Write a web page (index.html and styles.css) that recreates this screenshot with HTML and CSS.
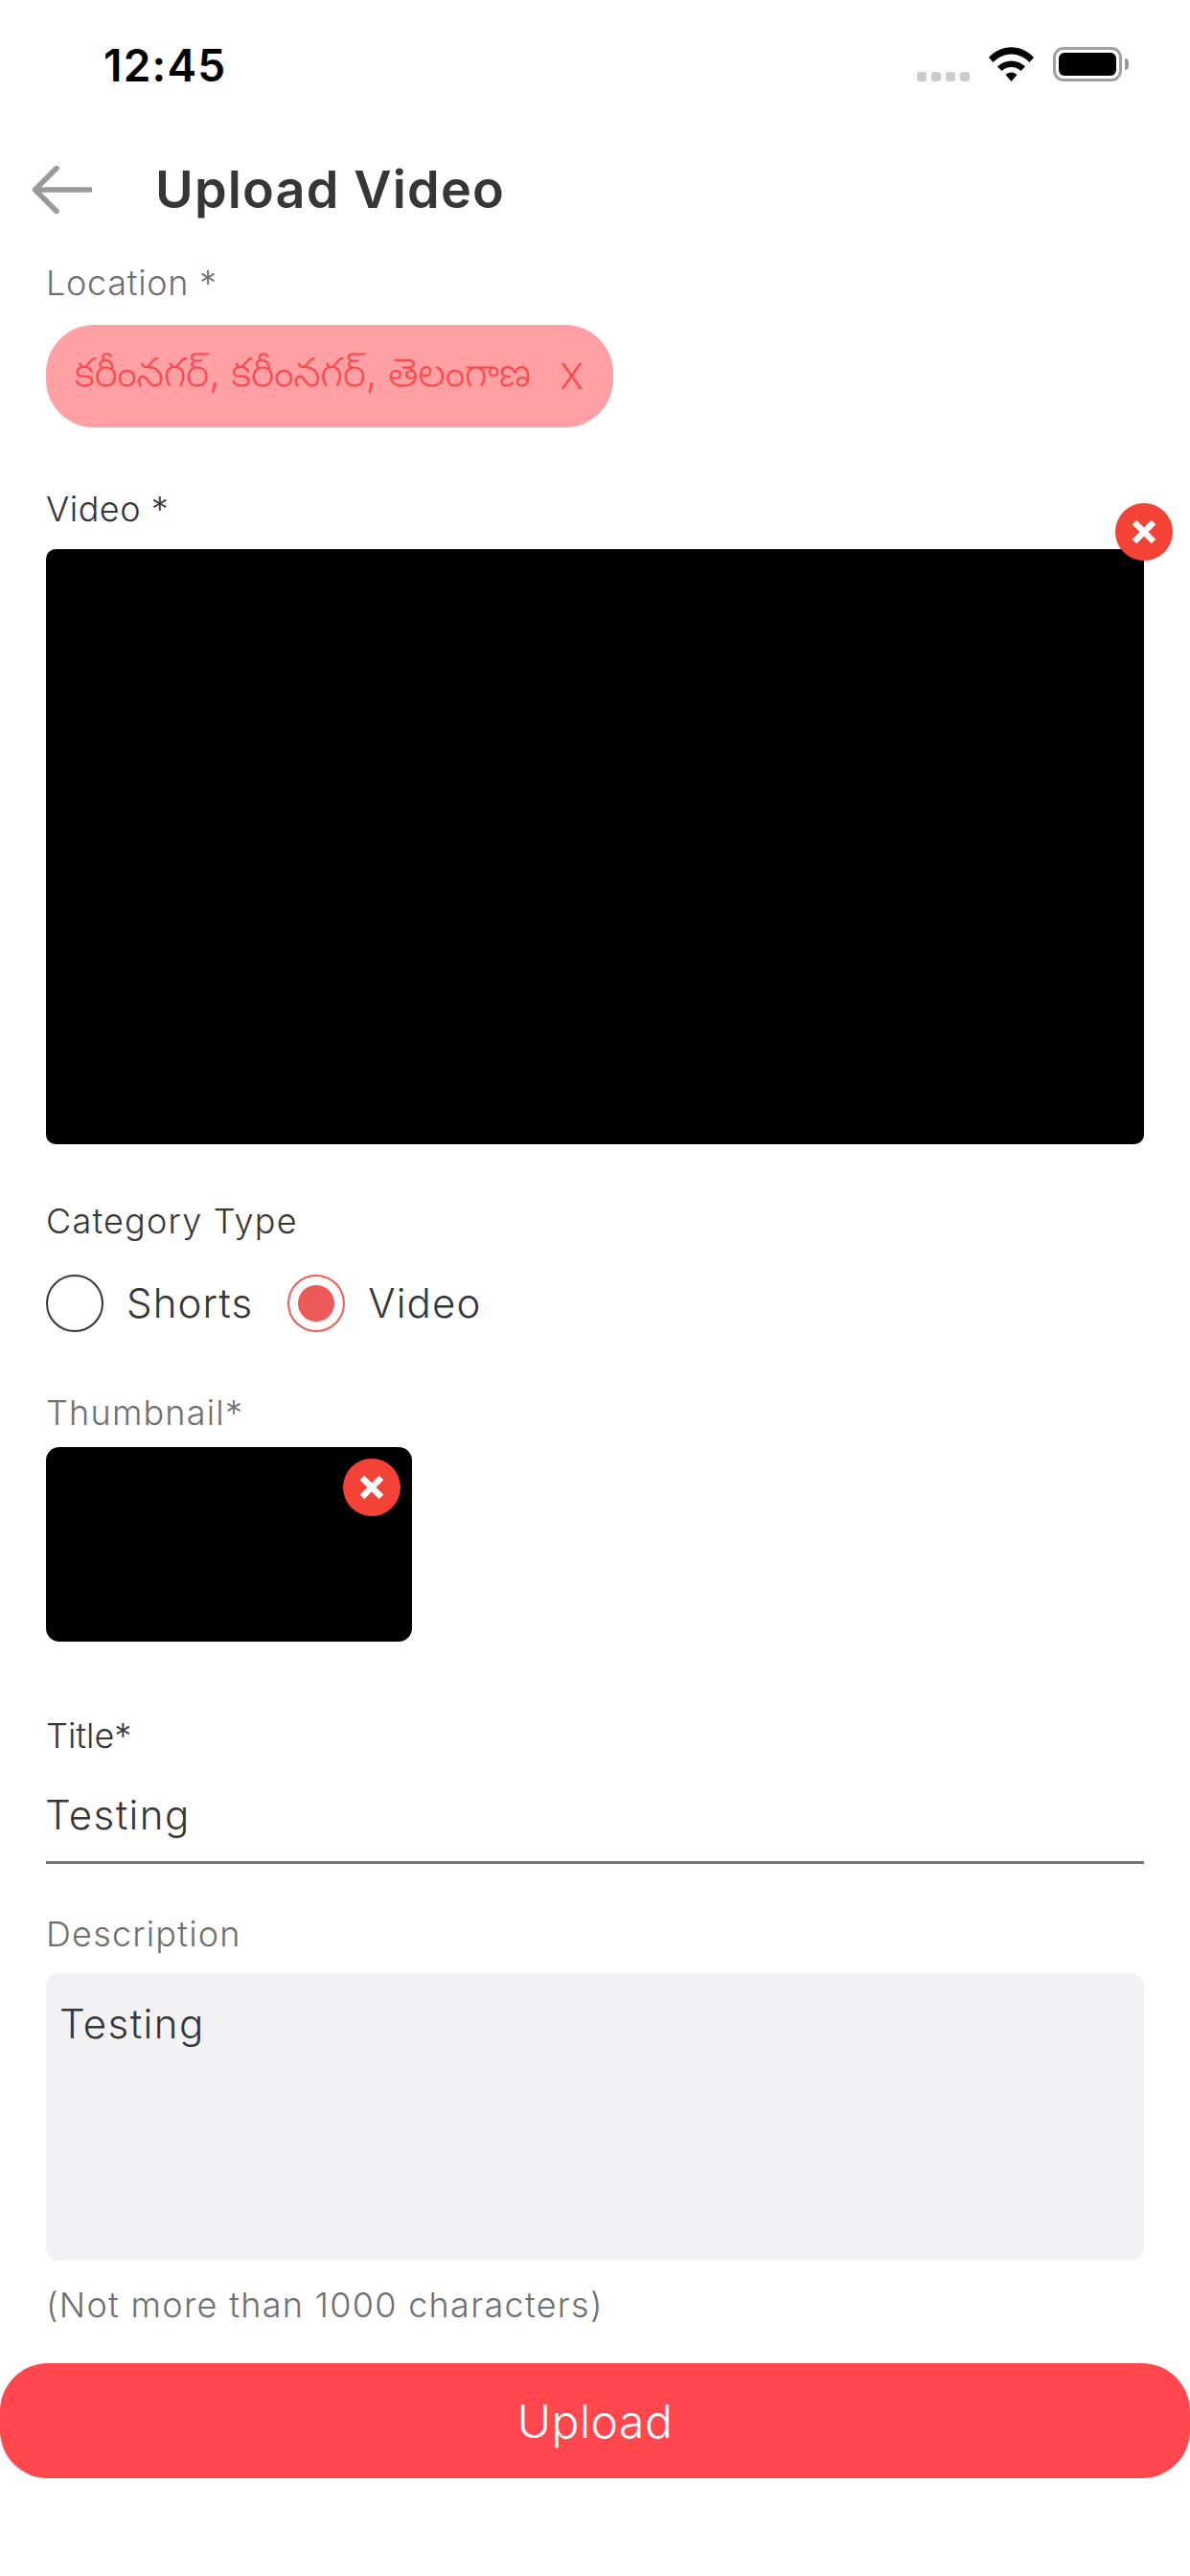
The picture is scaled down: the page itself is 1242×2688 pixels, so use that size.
FILE: index.html
```html
<!DOCTYPE html>
<html lang="te">
<head>
<meta charset="utf-8">
<title>Upload Video</title>
<link rel="stylesheet" href="styles.css">
</head>
<body>
<div class="screen">
  <div class="status">
    <span class="time">12:45</span>
    <div class="status-icons">
      <div class="signal"><i></i><i></i><i></i><i></i></div>
      <svg class="wifi" width="47" height="36" viewBox="0 0 47 36"><path d="M0 11C13-3.500 34-3.500 47 11L42.500 16C31 4.500 16 4.500 4.500 16Z" fill="#000"/><path d="M9 20.500C17 12.500 30 12.500 38 20.500L33.500 25C27.500 19.500 19.500 19.500 13.500 25Z" fill="#000"/><path d="M17.500 29C21 25.500 26 25.500 29.500 29L23.500 36Z" fill="#000"/></svg>
      <div class="battery"><div class="battery-body"><div class="battery-fill"></div></div><div class="battery-cap"></div></div>
    </div>
  </div>

  <header class="header">
    <svg class="back" width="62" height="50" viewBox="0 0 62 50"><path d="M60 25H3M25 2.500 2.500 25 25 47.500" fill="none" stroke="#999" stroke-width="5.500" stroke-linecap="round" stroke-linejoin="round"/></svg>
    <h1 class="title">Upload Video</h1>
  </header>

  <main class="form">
    <div class="label muted location-label">Location *</div>
    <div class="chip"><span class="chip-text">కరీంనగర్, కరీంనగర్, తెలంగాణ</span><span class="chip-x">X</span></div>

    <div class="label video-label">Video *</div>
    <div class="video">
      <button class="remove remove-video"><svg width="26" height="26" viewBox="0 0 26 26"><path d="M3 3 23 23M23 3 3 23" stroke="#fff" stroke-width="6.500"/></svg></button>
    </div>

    <div class="label category-label">Category Type</div>
    <div class="radios">
      <div class="radio"><span class="dot"></span><span class="radio-text">Shorts</span></div>
      <div class="radio"><span class="dot dot-on"></span><span class="radio-text">Video</span></div>
    </div>

    <div class="label muted thumb-label">Thumbnail*</div>
    <div class="thumb">
      <button class="remove remove-thumb"><svg width="26" height="26" viewBox="0 0 26 26"><path d="M3 3 23 23M23 3 3 23" stroke="#fff" stroke-width="6.500"/></svg></button>
    </div>

    <div class="label title-label">Title*</div>
    <div class="input">Testing</div>

    <div class="label muted desc-label">Description</div>
    <div class="textarea">Testing</div>
    <div class="label muted hint">(Not more than 1000 characters)</div>
  </main>

  <button class="upload">Upload</button>
</div>
</body>
</html>
```
FILE: styles.css
```css
* { box-sizing: border-box; }
html, body { margin: 0; padding: 0; background: #fff; }
body { font-family: Inter, "Noto Sans", "Noto Sans Telugu", sans-serif; color: #363636; }
.screen { width: 1242px; height: 2688px; background: #fff; overflow: hidden; }

.status { height: 134px; display: flex; justify-content: space-between; padding: 49px 64px 0 108px; }
.time { font-family: Inter, sans-serif; font-size: 46px; font-weight: 600; line-height: 38px; color: #000; letter-spacing: 1.2px; }
.status-icons { display: flex; align-items: flex-end; height: 36px; }
.signal { display: flex; gap: 5px; margin-right: 20px; }
.signal i { width: 10px; height: 10px; border-radius: 3px; background: #ccc; display: block; }
.wifi { display: block; margin-right: 20px; }
.battery { display: flex; align-items: center; }
.battery-body { width: 72px; height: 36px; border: 3px solid #a0a0a0; border-radius: 11px; padding: 3px; }
.battery-fill { width: 100%; height: 100%; background: #000; border-radius: 6px; }
.battery-cap { width: 4px; height: 12px; background: #999; border-radius: 0 6px 6px 0; margin-left: 3px; }

.header { height: 128px; display: flex; align-items: center; padding-left: 34px; gap: 66px; }
.back { display: block; flex: none; }
.title { margin: 0; font-size: 54px; font-weight: 600; color: #363636; line-height: 60px; letter-spacing: 1.15px; }

.form { padding: 8px 48px 0; }
.label { font-size: 36px; line-height: 50px; color: #363636; font-weight: 300; }
.muted { color: #6f6f6f; }
.location-label { letter-spacing: 0.7px; }

.chip { margin-top: 19px; display: inline-flex; align-items: center; height: 107px; width: 592px; padding: 0 31px 0 30px; justify-content: space-between; background: #ffa0a5; border-radius: 50px; color: #ff474d; font-weight: 300; white-space: nowrap; }
.chip-text { font-size: 41.500px; }
.chip-x { font-size: 37px; }

.video-label { margin-top: 60px; letter-spacing: 0.5px; }
.video { position: relative; margin-top: 17px; height: 621px; background: #000; border-radius: 10px; }
.remove { position: absolute; width: 60px; height: 60px; padding: 0; border: 0; border-radius: 50%; background: #f44336; display: flex; align-items: center; justify-content: center; }
.remove-video { top: -48px; right: -30px; }
.remove-thumb { top: 12px; right: 12px; }

.category-label { margin-top: 55px; letter-spacing: 1.2px; }
.radios { margin-top: 31px; display: flex; gap: 36px; }
.radio { display: flex; align-items: center; gap: 24px; font-size: 42px; font-weight: 300; line-height: 60px; letter-spacing: 1.1px; }
.dot { width: 60px; height: 60px; border-radius: 50%; border: 2px solid #363636; flex: none; }
.dot-on { border-color: #ee5a5a; background: radial-gradient(circle, #ee5a5a 0 18.500px, #fff 19.500px); }

.thumb-label { margin-top: 59px; letter-spacing: 1.2px; }
.thumb { position: relative; margin-top: 11px; width: 382px; height: 203px; background: #000; border-radius: 14px; }

.title-label { margin-top: 73px; }
.input { margin-top: 28px; padding-bottom: 18px; text-indent: -1px; border-bottom: 3px solid #757575; font-size: 42px; font-weight: 300; line-height: 60px; letter-spacing: 1.4px; }

.desc-label { margin-top: 48px; letter-spacing: 1.2px; }
.textarea { margin-top: 16px; height: 300px; padding: 23px 14px; background: #f2f2f4; border-radius: 14px; font-size: 42px; font-weight: 300; line-height: 60px; letter-spacing: 1.4px; }
.hint { margin-top: 21px; letter-spacing: 1.3px; }

.upload { display: block; margin-top: 36px; width: 1242px; height: 120px; border: 0; border-radius: 50px; background: #ff474d; color: #fff; font-family: Inter, sans-serif; font-size: 48px; font-weight: 300; letter-spacing: 0.5px; }
```
